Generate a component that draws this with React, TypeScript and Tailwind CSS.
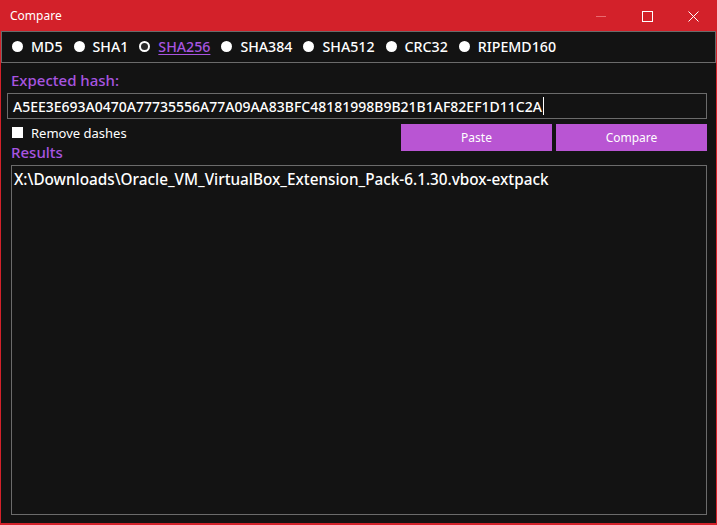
import { useState } from "react";

const ALGOS = ["MD5", "SHA1", "SHA256", "SHA384", "SHA512", "CRC32", "RIPEMD160"];
const HASH = "A5EE3E693A0470A77735556A77A09AA83BFC48181998B9B21B1AF82EF1D11C2A";
const FILE = "X:\\Downloads\\Oracle_VM_VirtualBox_Extension_Pack-6.1.30.vbox-extpack";

const font = { fontFamily: '"Noto Sans", "Open Sans", sans-serif' };

function Radio({ label, checked }: { label: string; checked: boolean }) {
  return (
    <label className="flex items-center gap-[8px] cursor-pointer">
      {checked ? (
        <span className="h-[11px] w-[11px] rounded-full border-[2px] border-white bg-[#2a2a2a]" />
      ) : (
        <span className="h-[11px] w-[11px] rounded-full bg-white" />
      )}
      <span
        className={`text-[14.2px] leading-none font-medium ${
          checked ? "text-[#a855e0] underline underline-offset-2" : "text-white"
        }`}
      >
        {label}
      </span>
    </label>
  );
}

export default function App() {
  const [algo] = useState("SHA256");
  return (
    <div className="h-[525px] w-[717px] bg-[#d3212a] p-px" style={font}>
      {/* title bar */}
      <div className="flex h-[30px] items-center">
        <span className="pl-[9px] text-[12px] text-white">Compare</span>
        <div className="ml-auto flex h-full">
          <div className="flex w-[46px] items-center justify-center">
            <span className="h-px w-[10px] bg-[#ea6a70]" />
          </div>
          <div className="flex w-[46px] items-center justify-center">
            <span className="h-[11px] w-[11px] border border-white" />
          </div>
          <div className="flex w-[46px] items-center justify-center">
            <svg width="11" height="11" viewBox="0 0 11 11">
              <path d="M0.5 0.5 L10.5 10.5 M10.5 0.5 L0.5 10.5" stroke="white" strokeWidth="1" />
            </svg>
          </div>
        </div>
      </div>

      <div className="flex h-[492px] flex-col bg-[#131313]">
        {/* algorithm bar */}
        <div className="flex h-[32px] items-center gap-[11px] border border-[#6b6b6b] pl-[10px]">
          {ALGOS.map((a) => (
            <Radio key={a} label={a} checked={a === algo} />
          ))}
        </div>

        <div className="flex flex-1 flex-col pl-[6px] pr-[9px] pb-[8px]">
          <div className="mt-[7px] pl-[4px] text-[15px] leading-[20px] font-medium text-[#a855e0]">
            Expected hash:
          </div>
          <div className="mt-[3px] flex h-[26px] items-center border border-[#6b6b6b] pl-[5px] pr-1">
            <span className="text-[14px] font-medium text-white">{HASH}</span>
            <span className="ml-px h-[18px] w-px bg-white" />
          </div>

          <div className="mt-[5px] flex">
            <div className="flex items-start gap-[8px] pl-[5px] pt-[2px]">
              <span className="mt-[1px] h-[11px] w-[11px] bg-white" />
              <span className="text-[13px] leading-[14px] text-white">Remove dashes</span>
            </div>
            <div className="ml-auto flex gap-[4px]">
              <button className="h-[27px] w-[151px] bg-[#b955d3] text-[12px] text-white">Paste</button>
              <button className="h-[27px] w-[151px] bg-[#b955d3] text-[12px] text-white">Compare</button>
            </div>
          </div>

          <div className="-mt-[9px] pl-[4px] text-[15px] leading-[20px] font-medium text-[#a855e0]">
            Results
          </div>
          <div className="mt-[3px] ml-[4px] flex-1 border border-[#6b6b6b] px-[2px] pt-[3px]">
            <div className="text-[15.3px] font-medium leading-[20px] text-white">{FILE}</div>
          </div>
        </div>
      </div>
    </div>
  );
}
